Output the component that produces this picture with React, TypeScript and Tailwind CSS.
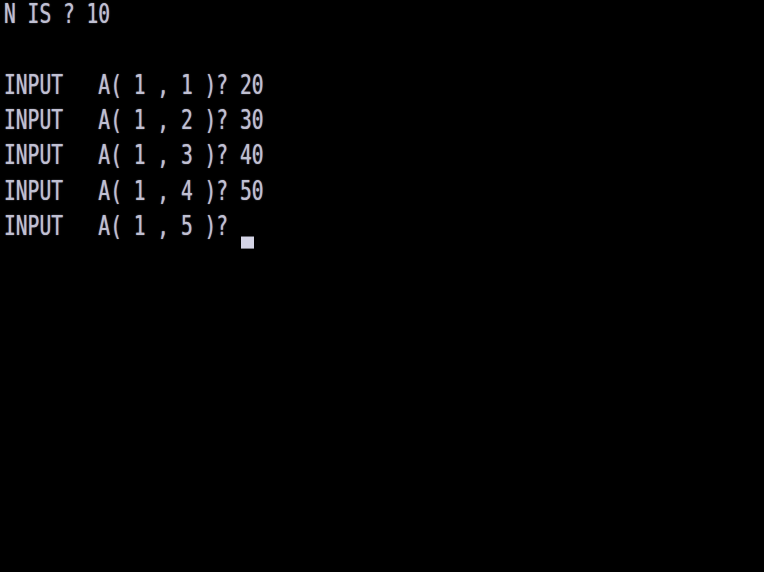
export default function App() {
  const lines = [
    'N IS ? 10',
    '',
    'INPUT   A( 1 , 1 )? 20',
    'INPUT   A( 1 , 2 )? 30',
    'INPUT   A( 1 , 3 )? 40',
    'INPUT   A( 1 , 4 )? 50',
  ];

  return (
    <div className="w-[764px] h-[572px] bg-black overflow-hidden">
      {/* tall narrow terminal glyphs: stretch the mono font vertically */}
      <div
        className="-mt-[2px] pl-[4px] origin-top-left scale-y-[1.34] text-[19.6px] leading-[26.35px] text-[#c0c0d2] whitespace-pre [text-shadow:0_0_1px_#9a9ab0]"
        style={{ fontFamily: '"DejaVu Sans Mono", "Liberation Mono", monospace' }}
      >
        {lines.map((line, i) => (
          <div key={i} className="h-[26.35px]">
            {line}
          </div>
        ))}
        <div className="h-[26.35px]">
          {'INPUT   A( 1 , 5 )? '}
          <span className="relative top-[10px] inline-block w-[13px] h-[9px] ml-[1px] bg-[#d4d4e6] align-baseline" />
        </div>
      </div>
    </div>
  );
}
